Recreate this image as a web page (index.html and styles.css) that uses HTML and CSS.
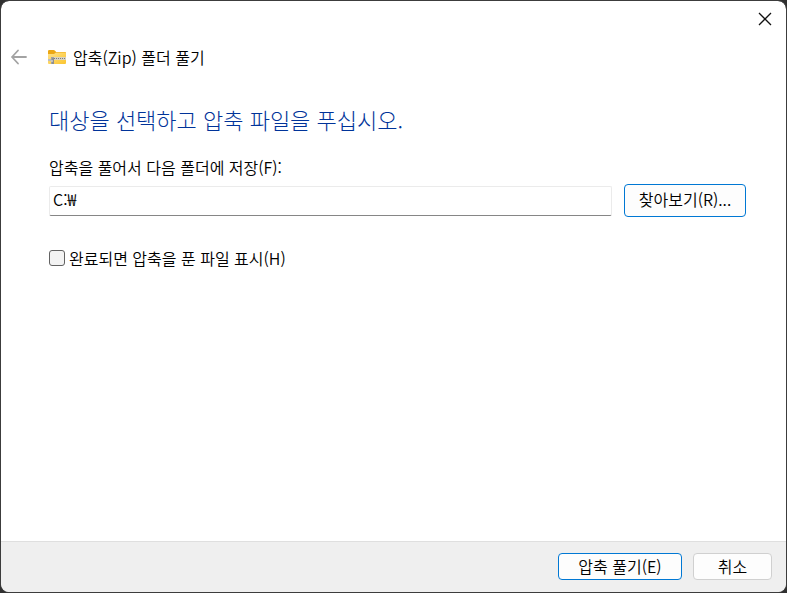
FILE: index.html
```html
<!DOCTYPE html>
<html lang="ko">
<head>
    <meta charset="UTF-8">
    <meta name="viewport" content="width=device-width, initial-scale=1.0">
    <title>압축(Zip) 폴더 풀기</title>
    <link rel="stylesheet" href="styles.css">
</head>
<body>
  <form class="dialog">
     <div class="titlebar">
        <button class="icon-button" type="button" aria-label="닫기">
           <svg width="14" height="14" viewBox="0 0 14 14" fill="none" stroke="#111" stroke-width="1.3">
              <path d="M1 1l12 12M13 1L1 13"/>
           </svg>
        </button>
     </div>
     <header class="header">
        <button class="icon-button" type="button" aria-label="뒤로" disabled>
           <svg width="18" height="16" viewBox="0 0 18 16" fill="none" stroke="#a3a3a3" stroke-width="1.8" stroke-linecap="round" stroke-linejoin="round">
              <path d="M16 8H2M8 1.5L2 8L8 14.5"/>
           </svg>
        </button>
        <svg class="folder" width="18" height="16" viewBox="0 0 18 16">
           <defs>
              <linearGradient id="front" x1="0" y1="0" x2="1" y2="1">
                 <stop offset="0" stop-color="#ffe28a"/>
                 <stop offset="1" stop-color="#fbc52f"/>
              </linearGradient>
           </defs>
           <path d="M0 2.200Q0 1 1.200 1H5.500Q6.200 1 6.800 1.600L8.200 3H17Q18 3 18 4V8H0z" fill="#eca713"/>
           <path d="M0 5H6L8 3.500H17Q18 3.500 18 4.500V14Q18 15 17 15H1Q0 15 0 14z" fill="url(#front)"/>
           <path d="M0 10H5V12H0z" fill="#bdbdbd"/>
           <path d="M5 9.500H18" stroke="#d8d2c0" stroke-width="3"/>
           <path d="M6 9.500H18" stroke="#7c7c7c" stroke-width="1" stroke-dasharray="1 1"/>
           <path d="M3 8H6V15H3z" fill="#a2a2a2"/>
           <path d="M5 9V15" stroke="#7d7d7d" stroke-width="1"/>
           <path d="M4 11V13" stroke="#ededed" stroke-width="1"/>
        </svg>
        <span>압축(Zip) 폴더 풀기</span>
     </header>
     <main class="content">
        <h1 class="heading">대상을 선택하고 압축 파일을 푸십시오.</h1>
        <label for="path">압축을 풀어서 다음 폴더에 저장(F):</label>
        <div class="path-row">
           <input class="path" id="path" type="text" value="C:₩">
           <button class="button primary browse" type="button">찾아보기(R)...</button>
        </div>
        <div class="check-row">
           <input class="check" id="show" type="checkbox">
           <label for="show">완료되면 압축을 푼 파일 표시(H)</label>
        </div>
     </main>
     <footer class="footer">
        <button class="button primary extract" type="submit">압축 풀기(E)</button>
        <button class="button cancel" type="button">취소</button>
     </footer>
  </form>
</body>
</html>
```
FILE: styles.css
```css
* {
  margin: 0;
  padding: 0;
  box-sizing: border-box;
}

body {
  background-color: #303030;
  color: #000;
  font-family: "Noto Sans CJK KR", sans-serif;
  font-size: 16px;
  font-weight: 350;
  line-height: 24px;
}

button, input {
  font: inherit;
  color: inherit;
}

.dialog {
  display: flex;
  flex-direction: column;
  min-height: 100vh;
  background-color: #fff;
  background-clip: padding-box;
  border: 1px solid #3c3c3c;
  border-radius: 9px;
  overflow: hidden;
}

.titlebar {
  display: flex;
  justify-content: flex-end;
  padding: 10px 14px;
}

.icon-button {
  display: flex;
  align-items: center;
  justify-content: center;
  border: none;
  background: none;
}

.titlebar .icon-button {
  height: 16px;
}

.header {
  display: flex;
  align-items: center;
  padding: 8px 9px;
}

.folder {
  margin: 0 7px 0 20px;
}

.content {
  flex: 1;
  padding: 27px 40px 24px 48px;
}

.heading {
  margin-bottom: 21px;
  color: #003399;
  font-size: 22px;
  font-weight: 300;
  line-height: 30px;
}

.path-row {
  display: flex;
  align-items: center;
  gap: 12px;
  margin-top: 5px;
}

.path {
  flex: 1;
  min-width: 0;
  height: 30px;
  padding: 0 3px 3px;
  border: 1px solid #ebebeb;
  border-bottom-color: #868686;
  border-radius: 2px;
  outline: none;
}

.check-row {
  display: flex;
  align-items: center;
  gap: 4px;
  margin-top: 29px;
}

.check {
  appearance: none;
  width: 16px;
  height: 16px;
  background-color: #f3f3f3;
  border: 1px solid #626262;
  border-radius: 3px;
}

.check:checked {
  background-color: #0067c0;
}

.button {
  height: 27px;
  padding-bottom: 3px;
  border: 1px solid #d0d0d0;
  border-radius: 4px;
  background-color: #fdfdfd;
}

.primary {
  border-color: #0078d4;
}

.browse {
  width: 122px;
  height: 33px;
}

.extract {
  width: 124px;
}

.cancel {
  width: 79px;
}

.footer {
  display: flex;
  justify-content: flex-end;
  gap: 11px;
  padding: 11px 14px 12px;
  background-color: #efefef;
  border-top: 1px solid #dfdfdf;
}
```
